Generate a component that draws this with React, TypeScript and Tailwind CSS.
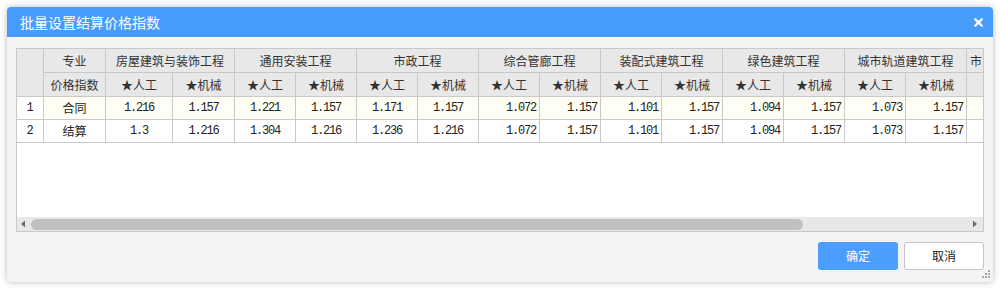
import { X } from 'lucide-react';

const groups = [
  '房屋建筑与装饰工程',
  '通用安装工程',
  '市政工程',
  '综合管廊工程',
  '装配式建筑工程',
  '绿色建筑工程',
  '城市轨道建筑工程',
];

const rows = [
  { no: 1, name: '合同', values: ['1.216', '1.157', '1.221', '1.157', '1.171', '1.157', '1.072', '1.157', '1.101', '1.157', '1.094', '1.157', '1.073', '1.157'] },
  { no: 2, name: '结算', values: ['1.3', '1.216', '1.304', '1.216', '1.236', '1.216', '1.072', '1.157', '1.101', '1.157', '1.094', '1.157', '1.073', '1.157'] },
];

const cjk = "font-['Noto_Sans_CJK_SC',sans-serif]";
const cell = 'border-r border-b border-[#c9c9c9] flex items-center overflow-hidden whitespace-nowrap';
const head = `${cell} bg-[#e8e8e8] justify-center text-[12px] text-[#333]`;

function App() {
  return (
    <div className={`w-[1000px] h-[289px] bg-white pt-[7px] pl-[7px] ${cjk}`}>
      <div className="relative w-[986px] h-[275px] bg-[#f4f4f4] rounded-[4px] overflow-hidden shadow-[0_0_6px_rgba(0,0,0,0.28)] flex flex-col">
        {/* Title bar */}
        <div className="h-[30px] shrink-0 bg-[#479bfb] flex items-center justify-between pl-[13px] pr-[8px]">
          <span className="text-[14px] text-white leading-none">批量设置结算价格指数</span>
          <X className="w-[13px] h-[13px] text-white" strokeWidth={4.5} />
        </div>

        {/* Body */}
        <div className="flex-1 flex flex-col px-[9px] pt-[11px]">
          <div className="w-[968px] h-[184px] border border-[#c9c9c9] bg-white flex flex-col overflow-hidden">
            <div className="grid grid-cols-[27px_62px_67px_62px_61px_61px_61px_61px_61px_61px_61px_61px_61px_61px_61px_61px_61px_61px] grid-rows-[24px_24px_23px_23px] w-max">
              <div className={`${head} row-span-2`}></div>
              <div className={head}>专业</div>
              {groups.map((g) => (
                <div key={g} className={`${head} col-span-2`}>{g}</div>
              ))}
              <div className={`${cell} bg-[#e8e8e8] col-span-2 justify-start pl-[3px] text-[12px] text-[#333]`}>市</div>

              <div className={head}>价格指数</div>
              {groups.map((g) => (
                <>
                  <div key={g + 'a'} className={head}>★人工</div>
                  <div key={g + 'b'} className={head}>★机械</div>
                </>
              ))}
              <div className={head}></div>
              <div className={head}></div>

              {rows.map((r) => (
                <>
                  <div key={r.no} className={`${cell} bg-white justify-center font-['Liberation_Mono',monospace] text-[12px] text-[#222]`}>{r.no}</div>
                  <div className={`${cell} ${r.no === 1 ? 'bg-[#fefef4]' : 'bg-white'} justify-center text-[12px] text-[#222]`}>{r.name}</div>
                  {r.values.map((v, i) => (
                    <div
                      key={i}
                      className={`${cell} ${r.no === 1 ? 'bg-[#fefef4]' : 'bg-white'} ${i < 6 ? 'justify-center' : 'justify-end pr-[3px]'} font-['Liberation_Mono',monospace] text-[12px] tracking-[-1.2px] text-[#222]`}
                    >
                      {v}
                    </div>
                  ))}
                  <div className={`${cell} ${r.no === 1 ? 'bg-[#fefef4]' : 'bg-white'}`}></div>
                  <div className={`${cell} ${r.no === 1 ? 'bg-[#fefef4]' : 'bg-white'}`}></div>
                </>
              ))}
            </div>

            <div className="flex-1 bg-white"></div>

            {/* Horizontal scrollbar */}
            <div className="h-[14px] shrink-0 bg-[#e8e8e8] flex items-center">
              <svg width="13" height="14" viewBox="0 0 13 14" className="shrink-0">
                <polygon points="4,7 8,3.5 8,10.5" fill="#6e6e6e" />
              </svg>
              <div className="w-[772px] h-[11px] rounded-full bg-[#c1c1c1] ml-[1px]"></div>
              <div className="flex-1"></div>
              <svg width="13" height="14" viewBox="0 0 13 14" className="shrink-0 mr-[1px]">
                <polygon points="8,7 4,3.5 4,10.5" fill="#6e6e6e" />
              </svg>
            </div>
          </div>

          {/* Buttons */}
          <div className="mt-[10px] flex justify-end gap-[6px]">
            <button className="w-[80px] h-[28px] rounded-[3px] bg-[#4b9efd] text-white text-[12px]">确定</button>
            <button className="w-[80px] h-[28px] rounded-[3px] bg-white border border-[#c4c4c4] text-[#222] text-[12px]">取消</button>
          </div>
        </div>

        {/* Resize grip */}
        <svg width="9" height="9" viewBox="0 0 9 9" className="absolute right-[2px] bottom-[3px]">
          <rect x="6" y="0" width="2" height="2" fill="#a8a8a8" />
          <rect x="3" y="3" width="2" height="2" fill="#a8a8a8" />
          <rect x="6" y="3" width="2" height="2" fill="#a8a8a8" />
          <rect x="0" y="6" width="2" height="2" fill="#a8a8a8" />
          <rect x="3" y="6" width="2" height="2" fill="#a8a8a8" />
          <rect x="6" y="6" width="2" height="2" fill="#a8a8a8" />
        </svg>
      </div>
    </div>
  );
}

export default App;
